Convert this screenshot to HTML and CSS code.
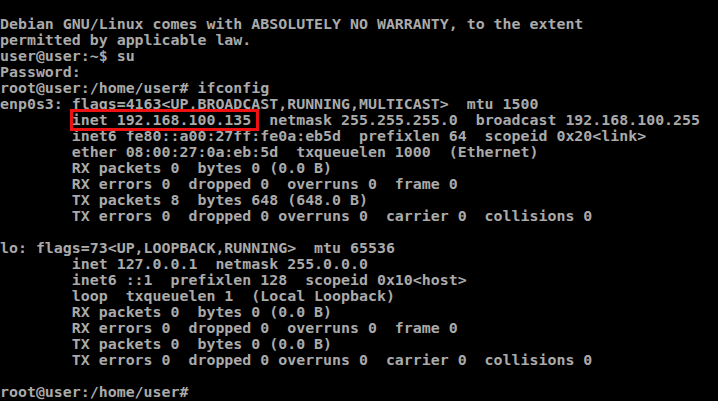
FILE: index.html
```html
<!DOCTYPE html>
<html lang="en">
<head>
  <meta charset="UTF-8">
  <meta name="viewport" content="width=device-width, initial-scale=1.0">
  <title>tty1</title>
  <link rel="stylesheet" href="styles.css">
</head>
<body>
  <div class="console">
<pre class="console-output">Debian GNU/Linux comes with ABSOLUTELY NO WARRANTY, to the extent
permitted by applicable law.
user@user:~$ su
Password:
root@user:/home/user# ifconfig
enp0s3: flags=4163&lt;UP,BROADCAST,RUNNING,MULTICAST&gt;  mtu 1500
        <span class="highlight">inet 192.168.100.135</span>  netmask 255.255.255.0  broadcast 192.168.100.255
        inet6 fe80::a00:27ff:fe0a:eb5d  prefixlen 64  scopeid 0x20&lt;link&gt;
        ether 08:00:27:0a:eb:5d  txqueuelen 1000  (Ethernet)
        RX packets 0  bytes 0 (0.0 B)
        RX errors 0  dropped 0  overruns 0  frame 0
        TX packets 8  bytes 648 (648.0 B)
        TX errors 0  dropped 0 overruns 0  carrier 0  collisions 0

lo: flags=73&lt;UP,LOOPBACK,RUNNING&gt;  mtu 65536
        inet 127.0.0.1  netmask 255.0.0.0
        inet6 ::1  prefixlen 128  scopeid 0x10&lt;host&gt;
        loop  txqueuelen 1  (Local Loopback)
        RX packets 0  bytes 0 (0.0 B)
        RX errors 0  dropped 0  overruns 0  frame 0
        TX packets 0  bytes 0 (0.0 B)
        TX errors 0  dropped 0 overruns 0  carrier 0  collisions 0

root@user:/home/user#</pre>
  </div>
</body>
</html>
```

FILE: styles.css
```css
:root {
  --console-bg: #000000;
  --console-fg: #aaaaaa;
  --mark-color: #ee1111;
  --row-height: 16px;
}

* {
  box-sizing: border-box;
  margin: 0;
  padding: 0;
}

html, body {
  height: 100%;
  background-color: var(--console-bg);
}

.console {
  min-height: 100vh;
  padding-top: var(--row-height);
  background-color: var(--console-bg);
  overflow: hidden;
}

.console-output {
  font-family: "DejaVu Sans Mono", "Liberation Mono", monospace;
  font-size: 14.91px;
  font-weight: bold;
  line-height: var(--row-height);
  color: var(--console-fg);
  white-space: pre;
}

/* red box drawn round the address */
.highlight {
  position: relative;
  display: inline-block;
  line-height: var(--row-height);
}

.highlight::after {
  content: '';
  position: absolute;
  top: -3px;
  bottom: -3px;
  left: -2px;
  right: -8px;
  border: 3px solid var(--mark-color);
}
```
